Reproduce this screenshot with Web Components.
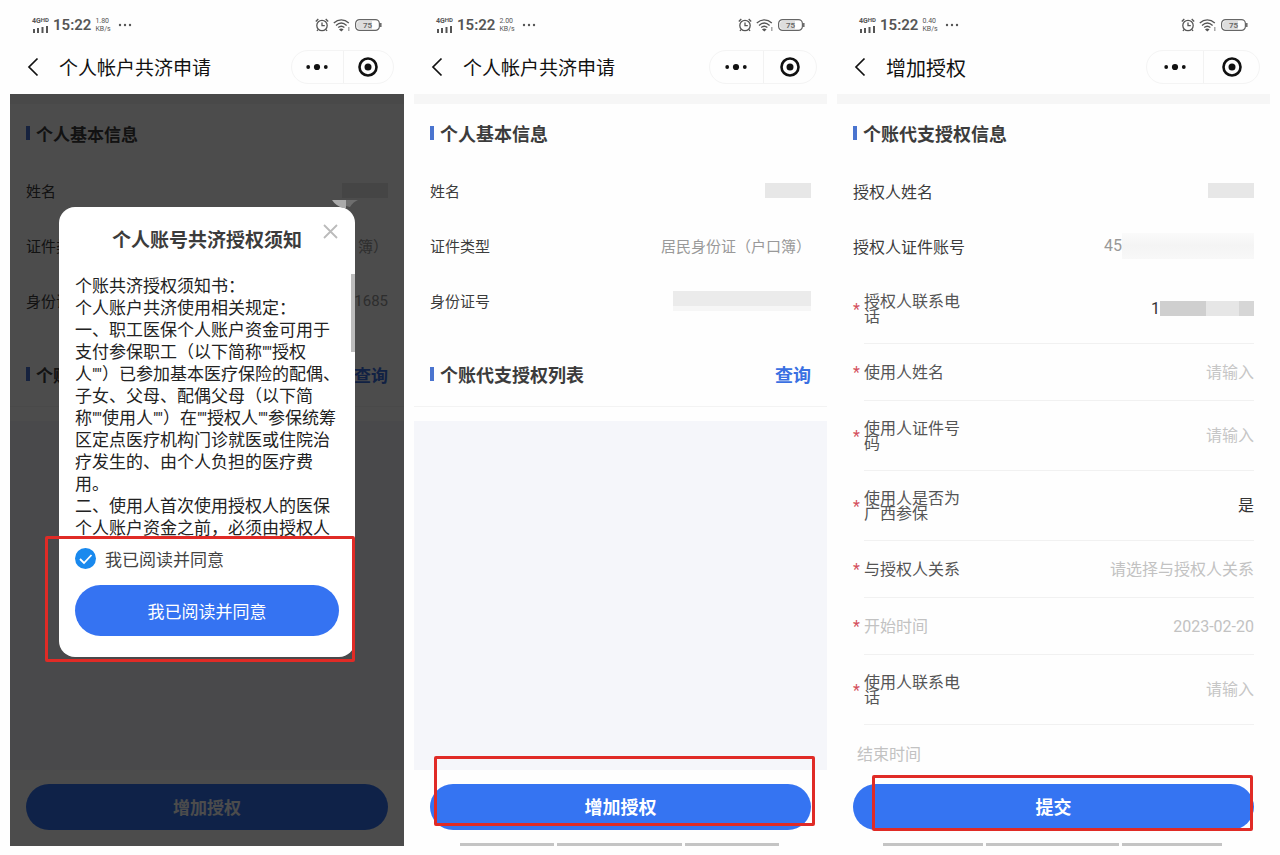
<!DOCTYPE html>
<html lang="zh-CN">
<head>
    <meta charset="UTF-8">
    <meta name="viewport" content="width=device-width, initial-scale=1.0">
    <title>个人帐户共济申请</title>
    <style>
        * {
            box-sizing: border-box;
        }

        body {
            margin: 0;
            padding: 0 10px 9px;
            min-height: 100vh;
            display: grid;
            grid-template-columns: 394fr 413fr 433fr;
            gap: 10px;
            background: #fefefe;
            color: #3c3c3c;
            font-family: Roboto, "Noto Sans CJK SC", sans-serif;
        }

        .first {
            --nav-size: 19px;
            --title-size: 17px;
            --text-size: 15px;
        }

        .second {
            --nav-size: 19px;
            --title-size: 18px;
            --text-size: 15px;
        }

        .third {
            --nav-size: 20px;
            --title-size: 18px;
            --text-size: 16px;
        }

        .list {
            flex: 1;
            margin: 14px 0;
            background: #f5f6fa;
        }
    </style>
</head>
<body>
    <phone-screen class="first" heading="个人帐户共济申请" rate="1.80">
        <section-title label="个人基本信息"></section-title>
        <info-row label="姓名"><pixel-mask class="name"></pixel-mask></info-row>
        <info-row label="证件类">簿）</info-row>
        <info-row label="身份证">1685</info-row>
        <section-title label="个账" action="查询"></section-title>
        <div class="list"></div>
        <pill-button label="增加授权"></pill-button>
        <notice-dialog slot="overlay" heading="个人账号共济授权须知" agree="我已阅读并同意">
            个账共济授权须知书：<br>
            个人账户共济使用相关规定：<br>
            一、职工医保个人账户资金可用于支付参保职工（以下简称""授权<br>人""）已参加基本医疗保险的配偶、子女、父母、配偶父母（以下简<br>称""使用人""）在""授权人""参保统筹<br>区定点医疗机构门诊就医或住院治疗发生的、由个人负担的医疗费<br>用。<br>
            二、使用人首次使用授权人的医保个人账户资金之前，必须由授权人
        </notice-dialog>
    </phone-screen>

    <phone-screen class="second" heading="个人帐户共济申请" rate="2.00" homebar>
        <section-title label="个人基本信息"></section-title>
        <info-row label="姓名"><pixel-mask class="name"></pixel-mask></info-row>
        <info-row label="证件类型">居民身份证（户口簿）</info-row>
        <info-row label="身份证号"><pixel-mask class="number"></pixel-mask></info-row>
        <section-title label="个账代支授权列表" action="查询"></section-title>
        <div class="list"></div>
        <pill-button label="增加授权">
            <highlight-frame style="inset: -28px -4px 4px 4px"></highlight-frame>
        </pill-button>
    </phone-screen>

    <phone-screen class="third" heading="增加授权" rate="0.40" homebar>
        <section-title label="个账代支授权信息"></section-title>
        <info-row label="授权人姓名"><pixel-mask class="name"></pixel-mask></info-row>
        <info-row label="授权人证件账号">45<pixel-mask class="account"></pixel-mask></info-row>
        <form-row label="授权人联系电话" value="1" tall required><pixel-mask class="phone"></pixel-mask></form-row>
        <form-row label="使用人姓名" placeholder="请输入" required></form-row>
        <form-row label="使用人证件号码" placeholder="请输入" tall required></form-row>
        <form-row label="使用人是否为广西参保" options="是" tall required></form-row>
        <form-row label="与授权人关系" options="请选择与授权人关系" unset required></form-row>
        <form-row label="开始时间" value="2023-02-20" muted required></form-row>
        <form-row label="使用人联系电话" placeholder="请输入" tall required></form-row>
        <form-row label="结束时间" muted last></form-row>
        <pill-button label="提交">
            <highlight-frame style="inset: -9px 1px -1px 19px"></highlight-frame>
        </pill-button>
    </phone-screen>

    <script>
        class PhoneScreen extends HTMLElement {
            constructor() {
                super();

                const shadow = this.attachShadow({ mode: "open" });

                const heading = this.getAttribute("heading");
                const rate = this.getAttribute("rate");
                const homebar = this.hasAttribute("homebar");

                shadow.innerHTML = `
                    <style>
                        :host {
                            display: flex;
                            flex-direction: column;
                            min-width: 0;
                        }

                        * {
                            box-sizing: border-box;
                        }

                        .status {
                            display: flex;
                            align-items: center;
                            gap: 4px;
                            height: 50px;
                            padding: 0 22px;
                            color: #555;
                        }

                        .signal, .rate {
                            font-size: 7px;
                            line-height: 8px;
                        }

                        .signal {
                            display: flex;
                            flex-direction: column;
                            font-weight: 700;
                        }

                        .signal small {
                            font-size: 6px;
                            vertical-align: top;
                            line-height: 6px;
                        }

                        .time {
                            font-size: 15px;
                            font-weight: 600;
                        }

                        .more {
                            margin-left: 3px;
                        }

                        .alarm {
                            margin-left: auto;
                        }

                        svg {
                            display: block;
                            flex: none;
                        }

                        nav {
                            display: flex;
                            align-items: center;
                            height: 34px;
                            margin-bottom: 10px;
                            padding: 0 10px 0 17px;
                            color: #111;
                        }

                        button {
                            padding: 0;
                            border: none;
                            background: none;
                            cursor: pointer;
                        }

                        h1 {
                            flex: 1;
                            margin: 0 0 0 20px;
                            padding-top: 3px;
                            font-size: var(--nav-size);
                            font-weight: 400;
                            line-height: 28px;
                        }

                        .capsule {
                            flex: 0 0 28%;
                            display: grid;
                            grid-template-columns: 1fr 1fr;
                            height: 34px;
                            border: 1px solid #f4f4f4;
                            border-radius: 17px;
                        }

                        .capsule button {
                            display: grid;
                            place-items: center;
                        }

                        .capsule button + button {
                            border-left: 1px solid #f2f2f2;
                        }

                        main {
                            position: relative;
                            flex: 1;
                            display: flex;
                            flex-direction: column;
                            border-top: 10px solid #f6f6f6;
                        }

                        .homebar {
                            display: grid;
                            grid-template-columns: 3fr 4fr 3fr;
                            gap: 3px;
                            margin: 13px 48px 0 46px;
                        }

                        .homebar i {
                            height: 3px;
                            background: #c4c4c4;
                        }

                        .bottom {
                            height: 16px;
                        }
                    </style>
                    <div class="status">
                        <span class="signal">
                            <span>4G<small>HD</small></span>
                            <svg width="17" height="8" viewBox="0 0 17 8" fill="currentColor"><path d="M1 4h2v4H1zM5 3h2v5H5zM9.500 2h2v6h-2zM14 1h2v7h-2z"/></svg>
                        </span>
                        <span class="time">15:22</span>
                        <span class="rate">${rate}<br>KB/s</span>
                        <svg class="more" width="14" height="4" fill="currentColor"><circle cx="2" cy="2" r="1.200"/><circle cx="7" cy="2" r="1.200"/><circle cx="12" cy="2" r="1.200"/></svg>
                        <svg class="alarm" width="14" height="14" viewBox="0 0 14 14" fill="none" stroke="currentColor" stroke-width="1.300"><circle cx="7" cy="7.500" r="5.200"/><path d="M7 4.500v3.200h2.800M.8 3.500L3.300 1M13.200 3.500L10.700 1M3 11.500l-1 1.500M11 11.500l1 1.500"/></svg>
                        <svg width="18" height="14" viewBox="0 0 18 14" fill="none" stroke="currentColor" stroke-width="1.300"><path d="M.8 5c4.500-4.200 10.500-4.200 15 0M3 7.400c3.300-3 7.300-3 10.600 0M5.200 9.600c2-1.800 4.200-1.800 6.200 0"/><path d="M6 11.400c1.500-1.200 3-1.200 4.600 0L8.300 13.600z" fill="currentColor" stroke="none"/><path d="M15.800 9v4" stroke="#999"/></svg>
                        <svg width="27" height="12" viewBox="0 0 27 12"><rect x=".6" y=".6" width="23.800" height="10.800" rx="4" fill="#fff" stroke="#666" stroke-width="1.200"/><path d="M5 2h12v8H5a3 3 0 0 1-3-3V5a3 3 0 0 1 3-3z" fill="#ddd"/><path d="M25.800 4v4" stroke="#666" stroke-width="1.500"/><text x="12.500" y="9" text-anchor="middle" font-size="8" font-weight="600" fill="#666">75</text></svg>
                    </div>
                    <nav>
                        <button aria-label="返回"><svg width="12" height="20" viewBox="0 0 12 20" fill="none" stroke="#111" stroke-width="1.700"><path d="M10.500 1.500L2 10l8.500 8.500"/></svg></button>
                        <h1>${heading}</h1>
                        <div class="capsule">
                            <button aria-label="更多"><svg width="22" height="8" fill="#111"><circle cx="2.200" cy="4" r="1.900"/><circle cx="11" cy="4" r="3.100"/><circle cx="19.800" cy="4" r="1.900"/></svg></button>
                            <button aria-label="关闭"><svg width="20" height="20" viewBox="0 0 20 20"><circle cx="10" cy="10" r="8.500" fill="none" stroke="#111" stroke-width="2.600"/><circle cx="10" cy="10" r="3.500" fill="#111"/></svg></button>
                        </div>
                    </nav>
                    <main>
                        <slot></slot>
                        ${homebar ? '<div class="homebar"><i></i><i></i><i></i></div>' : '<div class="bottom"></div>'}
                        <slot name="overlay"></slot>
                    </main>
                `;
            }
        }

        class SectionTitle extends HTMLElement {
            constructor() {
                super();

                const shadow = this.attachShadow({ mode: "open" });

                const label = this.getAttribute("label");
                const action = this.getAttribute("action");

                // a title with an action heads a list and gets a rule below
                shadow.innerHTML = `
                    <style>
                        :host {
                            box-sizing: border-box;
                            display: flex;
                            align-items: center;
                            height: 60px;
                            padding: 0 16px 2px;
                        }

                        :host([action]) {
                            height: 63px;
                            margin-top: 15px;
                            border-bottom: 1px solid #f3f3f3;
                        }

                        i {
                            width: 4px;
                            height: 14px;
                            margin-right: 6px;
                            background: #4a74cf;
                        }

                        h2 {
                            flex: 1;
                            margin: 0;
                            font-size: var(--title-size);
                            font-weight: 700;
                        }

                        button {
                            padding: 0;
                            border: none;
                            background: none;
                            color: #3a70e2;
                            font: 700 var(--title-size) Roboto, "Noto Sans CJK SC", sans-serif;
                            cursor: pointer;
                        }
                    </style>
                    <i></i>
                    <h2>${label}</h2>
                    ${action ? `<button>${action}</button>` : ""}
                `;
            }
        }

        class InfoRow extends HTMLElement {
            constructor() {
                super();

                const shadow = this.attachShadow({ mode: "open" });

                const label = this.getAttribute("label");

                shadow.innerHTML = `
                    <style>
                        :host {
                            box-sizing: border-box;
                            display: flex;
                            justify-content: space-between;
                            align-items: center;
                            height: 55px;
                            padding: 0 16px 2px;
                            font-size: var(--text-size);
                        }

                        .value {
                            display: flex;
                            align-items: center;
                            color: #999;
                        }
                    </style>
                    <span>${label}</span>
                    <span class="value"><slot></slot></span>
                `;
            }
        }

        class FormRow extends HTMLElement {
            constructor() {
                super();

                const shadow = this.attachShadow({ mode: "open" });

                const label = this.getAttribute("label");
                const value = this.getAttribute("value") || "";
                const placeholder = this.getAttribute("placeholder") || "";
                const options = this.getAttribute("options");
                const required = this.hasAttribute("required");

                const control = options
                    ? `<select id="field"><option>${options}</option></select>`
                    : `<input id="field" type="text" value="${value}" placeholder="${placeholder}">`;

                shadow.innerHTML = `
                    <style>
                        :host {
                            display: flex;
                            align-items: center;
                            height: 57px;
                            padding: 0 16px;
                            font-size: var(--text-size);
                            line-height: 15px;
                        }

                        :host([tall]) {
                            height: 70px;
                        }

                        :host([last]) {
                            flex: 1;
                            padding-left: 20px;
                        }

                        .mark {
                            width: 11px;
                            color: #d4505c;
                        }

                        .field {
                            flex: 1;
                            min-width: 0;
                            height: 100%;
                            box-sizing: border-box;
                            display: flex;
                            align-items: center;
                            border-bottom: 1px solid #f1f1f1;
                        }

                        :host([last]) .field {
                            border: none;
                        }

                        label {
                            width: 100px;
                            color: #555;
                        }

                        input, select {
                            flex: 1;
                            min-width: 0;
                            padding: 0;
                            border: none;
                            outline: none;
                            appearance: none;
                            background: none;
                            color: #333;
                            font: 400 var(--text-size) Roboto, "Noto Sans CJK SC", sans-serif;
                            text-align: right;
                            text-align-last: right;
                        }

                        input::placeholder {
                            color: #c6c6c6;
                        }

                        :host([unset]) select,
                        :host([muted]) label,
                        :host([muted]) input {
                            color: #c2c2c2;
                        }
                    </style>
                    ${required ? '<span class="mark">*</span>' : ""}
                    <div class="field">
                        <label for="field">${label}</label>
                        ${control}
                        <slot></slot>
                    </div>
                `;
            }
        }

        class PixelMask extends HTMLElement {
            constructor() {
                super();

                const shadow = this.attachShadow({ mode: "open" });

                shadow.innerHTML = `
                    <style>
                        :host {
                            display: block;
                            height: 15px;
                            background: #e7e7e7;
                        }

                        :host(.name) {
                            width: 46px;
                        }

                        :host(.number) {
                            width: 138px;
                            height: 20px;
                            background: linear-gradient(#ebebeb 75%, #f6f6f6 75%);
                        }

                        :host(.account) {
                            width: 132px;
                            height: 26px;
                            background: linear-gradient(#fafafa, #f4f4f4, #f8f8f8);
                        }

                        :host(.phone) {
                            width: 94px;
                            background: linear-gradient(90deg, #cfcfcf 49%, #e6e6e6 49% 84%, #d6d6d6 84%);
                        }
                    </style>
                `;
            }
        }

        class PillButton extends HTMLElement {
            constructor() {
                super();

                const shadow = this.attachShadow({ mode: "open" });

                const label = this.getAttribute("label");

                shadow.innerHTML = `
                    <style>
                        :host {
                            position: relative;
                            display: block;
                            margin: 0 16px;
                        }

                        button {
                            display: block;
                            width: 100%;
                            height: 46px;
                            padding: 0 0 2px;
                            border: none;
                            border-radius: 23px;
                            background: #3574f2;
                            color: #fff;
                            font: 700 var(--title-size) Roboto, "Noto Sans CJK SC", sans-serif;
                            cursor: pointer;
                        }
                    </style>
                    <button>${label}</button>
                    <slot></slot>
                `;
            }
        }

        class HighlightFrame extends HTMLElement {
            constructor() {
                super();

                const shadow = this.attachShadow({ mode: "open" });

                shadow.innerHTML = `
                    <style>
                        :host {
                            position: absolute;
                            display: block;
                            border: 3px solid #e02b26;
                            border-radius: 2px;
                            pointer-events: none;
                        }
                    </style>
                `;
            }
        }

        class NoticeDialog extends HTMLElement {
            constructor() {
                super();

                const shadow = this.attachShadow({ mode: "open" });

                const heading = this.getAttribute("heading");
                const agree = this.getAttribute("agree");

                // the backdrop also covers the strip under the nav bar
                shadow.innerHTML = `
                    <style>
                        :host {
                            position: absolute;
                            inset: -10px 0 0;
                            display: block;
                            padding: 113px 49px 0;
                            background: rgba(0, 0, 0, 0.7);
                        }

                        .dialog {
                            position: relative;
                            border-radius: 16px;
                            background: #fff;
                        }

                        .glint {
                            position: absolute;
                            top: -7px;
                            right: -4px;
                        }

                        h2 {
                            margin: 0;
                            font-size: 19px;
                            font-weight: 700;
                            line-height: 68px;
                            text-align: center;
                        }

                        .close {
                            position: absolute;
                            top: 17px;
                            right: 17px;
                            padding: 0;
                            border: none;
                            background: none;
                            cursor: pointer;
                        }

                        svg {
                            display: block;
                        }

                        .text {
                            height: 264px;
                            overflow: hidden;
                            padding: 0 10px 0 16px;
                            color: #222;
                            font-size: 17px;
                            line-height: 22px;
                        }

                        .thumb {
                            position: absolute;
                            top: 67px;
                            right: 0;
                            width: 4px;
                            height: 78px;
                            background: #bdbdbd;
                        }

                        .confirm {
                            position: relative;
                            padding: 0 16px 21px;
                        }

                        label {
                            display: flex;
                            align-items: center;
                            gap: 9px;
                            height: 38px;
                            margin-bottom: 8px;
                            color: #444;
                            font-size: 17px;
                        }

                        .tick {
                            display: grid;
                        }

                        .tick > * {
                            grid-area: 1 / 1;
                        }

                        input {
                            width: 21px;
                            height: 21px;
                            margin: 0;
                            appearance: none;
                            border-radius: 50%;
                            background: #1989ee;
                        }

                        .confirm > button {
                            display: block;
                            width: 100%;
                            height: 51px;
                            border: none;
                            border-radius: 26px;
                            background: #3573f2;
                            color: #fff;
                            font: 400 17px Roboto, "Noto Sans CJK SC", sans-serif;
                            cursor: pointer;
                        }

                        highlight-frame {
                            inset: -3px 0 -5px -14px;
                        }
                    </style>
                    <div class="dialog">
                        <svg class="glint" width="28" height="8"><path d="M1 0h14v8h-3Q5 6 1 0z" fill="#aaa"/><path d="M15 0h12q-5 2-8 7l-4-1z" fill="#6e6e6e"/></svg>
                        <h2>${heading}</h2>
                        <button class="close" aria-label="关闭"><svg width="15" height="15" fill="none" stroke="#bbb" stroke-width="1.800"><path d="M1 1l13 13M14 1L1 14"/></svg></button>
                        <div class="text"><slot></slot></div>
                        <div class="thumb"></div>
                        <div class="confirm">
                            <label>
                                <span class="tick">
                                    <input type="checkbox" checked>
                                    <svg width="21" height="21" fill="none" stroke="#fff" stroke-width="1.800"><path d="M5 11l4 4 7.500-8"/></svg>
                                </span>
                                ${agree}
                            </label>
                            <button>${agree}</button>
                            <highlight-frame></highlight-frame>
                        </div>
                    </div>
                `;
            }
        }

        customElements.define("highlight-frame", HighlightFrame);
        customElements.define("pixel-mask", PixelMask);
        customElements.define("pill-button", PillButton);
        customElements.define("section-title", SectionTitle);
        customElements.define("info-row", InfoRow);
        customElements.define("form-row", FormRow);
        customElements.define("notice-dialog", NoticeDialog);
        customElements.define("phone-screen", PhoneScreen);
    </script>
</body>
</html>
